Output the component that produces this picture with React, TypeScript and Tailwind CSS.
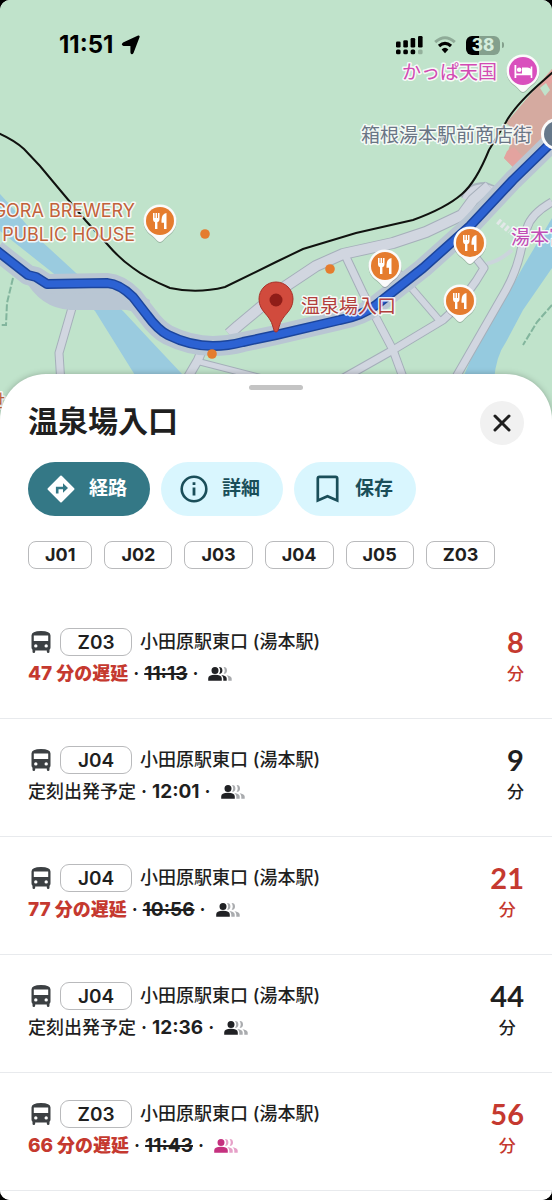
import { clsx } from "clsx";

type Crowding = "medium" | "low" | "accessible";

type Departure = {
  route: string;
  destination: string;
  scheduled: string;
  delay: number | null;
  minutes: number;
  crowding: Crowding;
};

const ROUTES = ["J01", "J02", "J03", "J04", "J05", "Z03"];

const DEPARTURES: Departure[] = [
  { route: "Z03", destination: "小田原駅東口 (湯本駅)", scheduled: "11:13", delay: 47, minutes: 8, crowding: "medium" },
  { route: "J04", destination: "小田原駅東口 (湯本駅)", scheduled: "12:01", delay: null, minutes: 9, crowding: "low" },
  { route: "J04", destination: "小田原駅東口 (湯本駅)", scheduled: "10:56", delay: 77, minutes: 21, crowding: "low" },
  { route: "J04", destination: "小田原駅東口 (湯本駅)", scheduled: "12:36", delay: null, minutes: 44, crowding: "low" },
  { route: "Z03", destination: "小田原駅東口 (湯本駅)", scheduled: "11:43", delay: 66, minutes: 56, crowding: "accessible" },
];

// person fill: front, middle, back
const CROWD_COLORS: Record<Crowding, [string, string, string]> = {
  medium: ["#202124", "#202124", "#a9abae"],
  low: ["#202124", "#a9abae", "#a9abae"],
  accessible: ["#c5317f", "#e6a0c8", "#e6a0c8"],
};

// side streets, drawn twice: outline first, then fill
const STREETS = [
  { d: "M229 334 238 326 262 306 286 286 316 266 343 254 393 243 426 232 462 215 473 200 489 186", w: 11 },
  { d: "M346 257 363 293 393 350 404 380", w: 8 },
  { d: "M396 270 439 320", w: 7 },
  { d: "M340 380 393 350 443 320 458 306 476 281 484 268 473 254", w: 8 },
  { d: "M452 384 506 290Q517 270 521 250L527 228Q531 214 552 202", w: 8 },
  { d: "M72 308 59 353 61 384", w: 8 },
  { d: "M202 350 198 360 184 384", w: 9 },
  { d: "M200 362 270 380", w: 6 },
];

const ROUTE_PATH =
  "M-4 250 28 275 36 277 47 284 107 283Q120 284 133 297L147 315Q158 330 168 335 190 346 213 346 228 346 243 342L276 335 340 320Q362 316 376 305L423 268 470 226 513 180 556 138";

function PlacePin({ x, y, kind }: { x: number; y: number; kind: "food" | "hotel" }) {
  return (
    <g transform={`translate(${x} ${y})`}>
      <path
        d="M0 21C-3 21-4 17-10 13A16.500 16.500 0 1 1 10 13C4 17 3 21 0 21Z"
        fill="#00000033"
        transform="translate(0 1)"
      />
      <path d="M0 21C-3 21-4 17-10 13A16.500 16.500 0 1 1 10 13C4 17 3 21 0 21Z" fill="#fbfbfb" />
      <circle r="14" fill={kind === "food" ? "#e57c2e" : "#d94fbd"} />
      {kind === "food" ? (
        <path
          d="M-7-8v6.500q0 2 2 2.700V8h2.400V1.200Q-.500.500-.500-1.500V-8H-2v5h-.900v-5h-1.600v5h-.900v-5ZM6.500-8Q1.500-7 1.500-1v2.800H4V8H6.500Z"
          fill="#fff"
        />
      ) : (
        <path
          d="M-8.500-6h1.800v8.500H-1V-3.500H4.500Q7-3.500 7.700-2V-4.500H9.300V7H7.700V4.300H-6.700V7h-1.800ZM-3.800-3.500a2.300 2.300 0 1 1 0 4.600 2.300 2.300 0 1 1 0-4.600Z"
          fill="#fff"
        />
      )}
    </g>
  );
}

function MapView() {
  return (
    <svg
      viewBox="0 0 552 430"
      preserveAspectRatio="xMidYMin slice"
      className="block h-full w-full font-['Inter','Noto_Sans_CJK_JP',sans-serif]"
      role="img"
      aria-label="温泉場入口周辺の地図"
    >
      <rect width="552" height="430" fill="#c0e3cb" />

      {/* rivers */}
      <path d="M0 194 10 205 38 238 76 273 123 311 150 340 182 374 182 380 138 380 95 311 53 273 0 231Z" fill="#9acbdf" />
      <path d="M552 218 539 240 523 267 506 297 476 347 462 380 494 380Q496 356 506 342L523 310 552 268Z" fill="#95cadf" />

      {/* trails */}
      <path d="M13 278 7 303 6 325H0M552 305 537 322 523 345" fill="none" stroke="#82b59d" strokeWidth="2" strokeDasharray="7 2" />

      {/* station building */}
      <path d="M552 69 540 83 506 123 515 131 508 151 504 158 513 167 540 145 552 134Z" fill="#d5aaa0" />
      <path d="M552 69 540 83 546 90 552 82ZM507 151 504 158 513 167 523 157 514 147Z" fill="#e3a39f" />
      <path d="m540 88 6-5 4 7-5 6Z" fill="#c0e3cb" />

      {/* streets */}
      <path d="M486 264Q500 261 512 250" fill="none" stroke="#cbd5dc" strokeWidth="4" />
      <path d="M466 199Q470 188 485 188L500 194" fill="none" stroke="#a9b5be" strokeWidth="12" />
      <path d="M467 200Q471 189 485 189L500 194" fill="none" stroke="#d1d6e0" strokeWidth="10" />
      <path d="M498 221 510 231" stroke="#e2e8e8" strokeWidth="6" strokeDasharray="3 2" />
      {STREETS.map((s) => (
        <path key={s.d} d={s.d} fill="none" stroke="#a5afba" strokeWidth={s.w + 1} strokeLinejoin="round" />
      ))}
      {STREETS.map((s) => (
        <path key={s.d} d={s.d} fill="none" stroke="#d1d6e0" strokeWidth={s.w - 1} strokeLinejoin="round" />
      ))}

      {/* highway and the highlighted route */}
      <path d="M24 278Q40 308 70 310H118Q138 308 146 324L150 300 107 278H40Z" fill="#b9c6d3" />
      <path d={ROUTE_PATH} fill="none" stroke="#b9c6d3" strokeWidth="20" strokeLinejoin="round" />
      <path d={ROUTE_PATH} fill="none" stroke="#1c459c" strokeWidth="10" strokeLinejoin="round" />
      <path d={ROUTE_PATH} fill="none" stroke="#2c62d3" strokeWidth="7" strokeLinejoin="round" />

      {/* railway */}
      <path
        d="M-2 133Q14 140 24 149L40 166 60 190 86 221 108 245Q120 259 133 268 146 278 170 288 197 294 225 287L276 262 303 249 356 233 413 220Q446 208 462 194 476 182 489 150L506 122Q516 104 544 80L554 71"
        fill="none"
        stroke="#10120f"
        strokeWidth="2"
      />

      <circle cx="205" cy="234" r="4.800" fill="#e57c2e" />
      <circle cx="330" cy="269" r="4.800" fill="#e57c2e" />
      <circle cx="212" cy="354" r="4.800" fill="#e57c2e" />

      <g fontSize="19" stroke="#ffffffd9" strokeWidth="3" strokeLinejoin="round" style={{ paintOrder: "stroke" }}>
        <text x="135" y="217" textAnchor="end" fill="#c2613a" fontSize="18">GORA BREWERY</text>
        <text x="135" y="241" textAnchor="end" fill="#c2613a" fontSize="18">PUBLIC HOUSE</text>
        <text x="402" y="79" fill="#d24bb3">かっぱ天国</text>
        <text x="361" y="142" fill="#6a7585">箱根湯本駅前商店街</text>
        <text x="511" y="244" fill="#c14bb5">湯本富</text>
        <text x="301" y="313" fill="#b23f3c">温泉場入口</text>
        <text x="-13" y="408" fill="#c2613a" fontSize="18">世</text>
      </g>

      <PlacePin x={160} y={221} kind="food" />
      <PlacePin x={385} y={266} kind="food" />
      <PlacePin x={470} y={243} kind="food" />
      <PlacePin x={460} y={301} kind="food" />
      <PlacePin x={523} y={71} kind="hotel" />
      <circle cx="557" cy="134" r="16" fill="#fbfbfb" />
      <circle cx="557" cy="134" r="13" fill="#66788a" />

      {/* selected stop */}
      <path
        d="M276 332C274 332 274 330 273 327 270 314 259 312 259 299A17 17 0 0 1 293 299C293 312 282 314 279 327 278 330 278 332 276 332Z"
        fill="#d14b3d"
        stroke="#a93229"
      />
      <circle cx="276" cy="300" r="6.500" fill="#8f1d18" />
    </svg>
  );
}

function StatusBar() {
  return (
    <div className="absolute inset-x-0 top-0 flex items-center justify-between pt-[31px] pr-12 pl-[59px]">
      <div className="flex items-center gap-2">
        <span className="text-[24px] leading-7 font-bold text-black">11:51</span>
        <svg viewBox="0 0 20 20" className="h-5 w-5" aria-hidden="true">
          <path
            d="M17.600 1.600 11.500 17.500Q10.800 18.800 10.500 17.300V9.800H2.700Q1.200 9.500 2.500 8.600Z"
            fill="#000"
            stroke="#000"
            strokeWidth="2.200"
            strokeLinejoin="round"
          />
        </svg>
      </div>
      <div className="flex items-center gap-[10px]">
        <svg viewBox="0 0 28 20" className="h-5 w-7" aria-hidden="true">
          <g fill="#000">
            <rect x="0" y="6.500" width="4.600" height="6" rx="1.300" />
            <rect x="7.300" y="5.200" width="4.600" height="7.300" rx="1.300" />
            <rect x="14.600" y="3" width="4.600" height="9.500" rx="1.300" />
            <rect x="22" y="1" width="4.600" height="11.500" rx="1.300" />
            <rect x="0" y="14.500" width="4.600" height="4.800" rx="1.500" />
            <rect x="7.300" y="14.500" width="4.600" height="4.800" rx="1.500" />
            <rect x="14.600" y="14.500" width="4.600" height="4.800" rx="1.500" />
          </g>
          <rect x="22" y="14.500" width="4.600" height="4.800" rx="1.500" fill="#94b09c" />
        </svg>
        <svg viewBox="0 0 22 18" className="h-[18px] w-[22px]" aria-hidden="true">
          <path d="M1.200 6.200Q11-2.800 20.800 6.200" fill="none" stroke="#8fab98" strokeWidth="3" />
          <path d="M5 10Q11 4.600 17 10" fill="none" stroke="#000" strokeWidth="3.200" />
          <path d="M7.600 13.400Q11 10.300 14.400 13.400L11 17.300Z" fill="#000" />
        </svg>
        <div className="flex items-center gap-[2px]">
          <div className="flex h-[19px] w-[34px] items-center justify-center rounded-[6px] bg-linear-to-r from-black from-38% to-[#84a08d] to-38% text-[17px] leading-none font-extrabold text-[#d5eedd]">
            38
          </div>
          <div className="h-[6px] w-[2px] rounded-r-full bg-[#84a08d]" />
        </div>
      </div>
    </div>
  );
}

function BusIcon() {
  return (
    <svg viewBox="0 0 20 22" className="h-[22px] w-5 shrink-0" aria-hidden="true">
      <path
        fillRule="evenodd"
        fill="#3c4043"
        d="M.500 4.500Q.500 0 10 0T19.500 4.500V16.500Q19.500 18 18.500 18.700V20.500Q18.500 22 17.200 22T15.800 20.500V19.500H4.200V20.500Q4.200 22 2.800 22T1.500 20.500V18.700Q.500 18 .500 16.500ZM2.800 4.500V10H17.200V4.500ZM4.800 13.200A1.700 1.700 0 1 0 4.800 16.600 1.700 1.700 0 1 0 4.800 13.200ZM15.200 13.200A1.700 1.700 0 1 0 15.200 16.600 1.700 1.700 0 1 0 15.200 13.200Z"
      />
    </svg>
  );
}

function CrowdIcon({ crowding }: { crowding: Crowding }) {
  const [front, middle, back] = CROWD_COLORS[crowding];
  return (
    <svg viewBox="0 0 24 14" className="ml-[10px] h-[14px] w-6" role="img" aria-label="混雑状況">
      <path d="M7 0a3.500 3.500 0 1 1 0 7A3.500 3.500 0 1 1 7 0ZM.200 13.800V11.500Q.200 7.800 7 7.800T13.800 11.500V13.800Z" fill={front} />
      <path d="M11 0A3.400 3.400 0 1 1 11 6.800Q13.400 3.400 11 0ZM13.400 8Q18.700 8.800 18.700 11.500V13.800H15.300V11.500Q15.300 9.600 13.400 8Z" fill={middle} />
      <path d="M15.600 0A3.400 3.400 0 1 1 15.600 6.800Q17.900 3.400 15.600 0ZM18.500 8.200Q23.700 9 23.700 11.500V13.800H20.300V11.500Q20.300 9.700 18.500 8.200Z" fill={back} />
    </svg>
  );
}

function DepartureRow({ departure }: { departure: Departure }) {
  const { route, destination, scheduled, delay, minutes, crowding } = departure;
  const late = delay !== null;

  return (
    <li className="flex items-start justify-between border-b border-[#e8eaed] px-7 pt-[27px] pb-[30px]">
      <div className="flex flex-col gap-1">
        <div className="flex h-7 items-center pl-[3px]">
          <BusIcon />
          <span className="ml-[9px] flex h-7 w-[72px] items-center justify-center rounded-[9px] border border-[#b9babc] text-[19px] leading-none font-semibold">
            {route}
          </span>
          <span className="ml-2 text-lg leading-7 font-medium">{destination}</span>
        </div>
        <div className="flex h-7 items-center text-lg leading-7">
          {late ? (
            <span className="font-extrabold text-[#c5392f]">
              <span className="text-[19px]">{delay}</span> 分の遅延
            </span>
          ) : (
            <span className="font-medium">定刻出発予定</span>
          )}
          <span className="mx-[5px] font-bold">·</span>
          <span className={clsx("text-[19px] font-bold", late && "line-through decoration-2")}>{scheduled}</span>
          <span className="ml-[5px] font-bold">·</span>
          <CrowdIcon crowding={crowding} />
        </div>
      </div>
      <div className={clsx("flex flex-col items-center gap-1", late && "text-[#c5392f]")}>
        <span className="font-['Lato','Noto_Sans_CJK_JP',sans-serif] text-[29px] leading-7 font-bold">{minutes}</span>
        <span className="text-[17px] leading-7 font-medium">分</span>
      </div>
    </li>
  );
}

export default function App() {
  return (
    <div className="min-h-screen bg-black font-['Inter','Noto_Sans_CJK_JP',sans-serif] text-[#1f1f1f]" lang="ja">
      <div className="flex min-h-screen flex-col overflow-hidden rounded-[10px] bg-white">
        <header className="relative h-[430px]">
          <MapView />
          <StatusBar />
        </header>

        <main className="relative -mt-14 grow rounded-t-[46px] bg-white pt-[11px] shadow-[0_0_6px_rgba(0,0,0,0.25)]">
          <div className="mx-auto h-[5px] w-[54px] rounded-full bg-[#c4c4c4]" />

          <div className="mt-[11px] flex h-11 items-center justify-between px-7">
            <h1 className="pb-1 text-[30px] leading-10 font-bold">温泉場入口</h1>
            <button type="button" aria-label="閉じる" className="flex h-11 w-11 items-center justify-center rounded-full bg-[#f1f1f1]">
              <svg viewBox="0 0 18 18" className="h-[18px] w-[18px]" aria-hidden="true">
                <path d="M2 2 16 16M16 2 2 16" stroke="#1f1f1f" strokeWidth="3" strokeLinecap="round" />
              </svg>
            </button>
          </div>

          <div className="mt-[17px] flex gap-[11px] px-7">
            <button type="button" className="flex h-[54px] items-center gap-[14px] rounded-full bg-[#347886] pr-[23px] pl-[19px] text-[19px] font-bold text-white">
              <svg viewBox="0 0 28 28" className="h-7 w-7" aria-hidden="true">
                <path d="M14 1.500 26.500 14 14 26.500 1.500 14Z" fill="#fff" stroke="#fff" strokeWidth="2" strokeLinejoin="round" />
                <path d="M10.200 18.500V13H18" fill="none" stroke="#347886" strokeWidth="2.600" />
                <path d="M16 8.300 21 13 16 17.700Z" fill="#347886" />
              </svg>
              経路
            </button>
            <button type="button" className="flex h-[54px] items-center gap-[14px] rounded-full bg-[#d9f6fe] pr-[23px] pl-[19px] text-[19px] font-bold text-[#1a4e59]">
              <svg viewBox="0 0 28 28" className="h-7 w-7" aria-hidden="true">
                <circle cx="14" cy="14" r="12.300" fill="none" stroke="currentColor" strokeWidth="2.600" />
                <path d="M12.600 7.200h2.800V10h-2.800ZM12.600 12.400h2.800v8.200h-2.800Z" fill="currentColor" />
              </svg>
              詳細
            </button>
            <button type="button" className="flex h-[54px] items-center gap-[14px] rounded-full bg-[#d9f6fe] pr-[23px] pl-[19px] text-[19px] font-bold text-[#1a4e59]">
              <svg viewBox="0 0 28 28" className="h-7 w-7" aria-hidden="true">
                <path d="M4.800 25.500V3.500Q4.800 1.800 6.500 1.800H22.500Q24.200 1.800 24.200 3.500V25.500L14.500 21.200Z" fill="none" stroke="currentColor" strokeWidth="2.700" />
              </svg>
              保存
            </button>
          </div>

          <ul className="mt-[25px] flex gap-3 px-7" aria-label="路線">
            {ROUTES.map((route) => (
              <li
                key={route}
                className="flex h-7 items-center rounded-lg border border-[#b9babc] px-4 text-lg leading-none font-bold"
              >
                {route}
              </li>
            ))}
          </ul>

          <ul className="mt-8" aria-label="出発時刻">
            {DEPARTURES.map((departure) => (
              <DepartureRow key={departure.route + departure.scheduled} departure={departure} />
            ))}
          </ul>
        </main>
      </div>
    </div>
  );
}
